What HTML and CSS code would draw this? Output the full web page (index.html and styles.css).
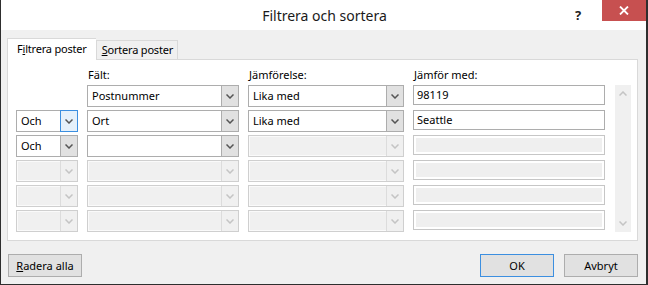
FILE: index.html
```html
<!DOCTYPE html>
<html lang="sv">
<head>
  <meta charset="UTF-8">
  <title>Filtrera och sortera</title>
  <link rel="stylesheet" href="styles.css">
</head>
<body>

  <div class="window">
    <!-- Title bar -->
    <div class="titlebar">
      <span class="title">Filtrera och sortera</span>
      <span class="help">?</span>
      <span class="close">
        <svg width="10" height="9" viewBox="0 0 10 9"><path d="M1 0.5 L9 8.5 M9 0.5 L1 8.5" stroke="#fff" stroke-width="1.8"/></svg>
      </span>
    </div>

    <div class="content">
      <!-- Tabs -->
      <div class="tabs">
        <div class="tab active">F<u>i</u>ltrera poster</div>
        <div class="tab"><u>S</u>ortera poster</div>
      </div>

      <div class="panel">
        <div class="grid">
          <div></div>
          <div class="label">Fält:</div>
          <div class="label">Jämförelse:</div>
          <div class="label">Jämför med:</div>

          <!-- row 1 -->
          <div></div>
          <div class="combo"><span class="val">Postnummer</span><span class="btn"><svg width="8" height="5" viewBox="0 0 8 5"><path d="M0.5 0.5 L4 4 L7.5 0.5" fill="none" stroke="#555" stroke-width="1.5"/></svg></span></div>
          <div class="combo"><span class="val">Lika med</span><span class="btn"><svg width="8" height="5" viewBox="0 0 8 5"><path d="M0.5 0.5 L4 4 L7.5 0.5" fill="none" stroke="#555" stroke-width="1.5"/></svg></span></div>
          <div class="field">98119</div>

          <!-- row 2 -->
          <div class="combo hover"><span class="val">Och</span><span class="btn"><svg width="8" height="5" viewBox="0 0 8 5"><path d="M0.5 0.5 L4 4 L7.5 0.5" fill="none" stroke="#555" stroke-width="1.5"/></svg></span></div>
          <div class="combo"><span class="val">Ort</span><span class="btn"><svg width="8" height="5" viewBox="0 0 8 5"><path d="M0.5 0.5 L4 4 L7.5 0.5" fill="none" stroke="#555" stroke-width="1.5"/></svg></span></div>
          <div class="combo"><span class="val">Lika med</span><span class="btn"><svg width="8" height="5" viewBox="0 0 8 5"><path d="M0.5 0.5 L4 4 L7.5 0.5" fill="none" stroke="#555" stroke-width="1.5"/></svg></span></div>
          <div class="field">Seattle</div>

          <!-- row 3 -->
          <div class="combo"><span class="val">Och</span><span class="btn"><svg width="8" height="5" viewBox="0 0 8 5"><path d="M0.5 0.5 L4 4 L7.5 0.5" fill="none" stroke="#555" stroke-width="1.5"/></svg></span></div>
          <div class="combo"><span class="val"></span><span class="btn"><svg width="8" height="5" viewBox="0 0 8 5"><path d="M0.5 0.5 L4 4 L7.5 0.5" fill="none" stroke="#555" stroke-width="1.5"/></svg></span></div>
          <div class="combo disabled"><span class="val"></span><span class="btn"><svg width="8" height="5" viewBox="0 0 8 5"><path d="M0.5 0.5 L4 4 L7.5 0.5" fill="none" stroke="#c4c4c4" stroke-width="1.5"/></svg></span></div>
          <div class="field disabled"></div>

          <!-- rows 4-6 -->
          <script>
            for (let i = 0; i < 3; i++) {
              let chev = '<span class="btn"><svg width="8" height="5" viewBox="0 0 8 5"><path d="M0.5 0.5 L4 4 L7.5 0.5" fill="none" stroke="#c4c4c4" stroke-width="1.5"/></svg></span>';
              document.write(`
                <div class="combo disabled"><span class="val"></span>${chev}</div>
                <div class="combo disabled"><span class="val"></span>${chev}</div>
                <div class="combo disabled"><span class="val"></span>${chev}</div>
                <div class="field disabled"></div>
              `);
            }
          </script>
        </div>

        <!-- Scrollbar -->
        <div class="scrollbar">
          <svg width="8" height="5" viewBox="0 0 8 5"><path d="M0.5 4.5 L4 1 L7.5 4.5" fill="none" stroke="#c4c4c4" stroke-width="1.5"/></svg>
          <svg width="8" height="5" viewBox="0 0 8 5"><path d="M0.5 0.5 L4 4 L7.5 0.5" fill="none" stroke="#c4c4c4" stroke-width="1.5"/></svg>
        </div>
      </div>

      <!-- Buttons -->
      <div class="buttons">
        <button class="button"><u>R</u>adera alla</button>
        <div class="spacer"></div>
        <button class="button default">OK</button>
        <button class="button">Avbryt</button>
      </div>
    </div>
  </div>

</body>
</html>
```

FILE: styles.css
```css
/* Global */
* {
  margin: 0;
  padding: 0;
  box-sizing: border-box;
}

body {
  font-family: 'Noto Sans', sans-serif;
  font-size: 11px;
  color: #000;
  background: #f0f0f0;
}

.window {
  width: 648px;
  height: 285px;
  background: #f0f0f0;
  border-left: 1px solid #2e2e2e;
  border-right: 2px solid #2e2e2e;
  border-bottom: 1px solid #2e2e2e;
  display: flex;
  flex-direction: column;
}

/* Title bar */
.titlebar {
  height: 30px;
  background: #fff;
  position: relative;
  display: flex;
  justify-content: center;
  align-items: center;
}

.title {
  font-size: 14px;
  color: #1a1a1a;
  margin-left: 2px;
}

.help {
  position: absolute;
  left: 574px;
  top: 6px;
  font-size: 13px;
  font-weight: bold;
  color: #222;
}

.close {
  position: absolute;
  right: 0;
  top: 0;
  width: 44px;
  height: 21px;
  background: #c75050;
  display: flex;
  justify-content: center;
  align-items: center;
}

/* Content */
.content {
  flex: 1;
  padding: 8px 8px 7px 6px;
  display: flex;
  flex-direction: column;
}

.tabs {
  display: flex;
  align-items: flex-end;
  height: 21px;
  position: relative;
  z-index: 1;
}

.tab {
  height: 19px;
  padding: 0 4px 0 5px;
  line-height: 17px;
  letter-spacing: -0.2px;
  border: 1px solid #d9d9d9;
  border-bottom: none;
  background: #f0f0f0;
}

.tab.active {
  height: 22px;
  margin-bottom: -1px;
  padding: 0 9px 0 9px;
  line-height: 20px;
  background: #fff;
  border-right: none;
}

.panel {
  display: flex;
  align-items: flex-start;
  background: #fff;
  border: 1px solid #d9d9d9;
  padding: 7px 6px 7px 8px;
  height: 182px;
}

/* Filter grid */
.grid {
  display: grid;
  grid-template-columns: 62px 152px 156px 192px;
  grid-template-rows: 15px repeat(6, 22px);
  column-gap: 9px;
  row-gap: 3px;
}

.label {
  line-height: 16px;
  padding-left: 1px;
}

.combo {
  display: flex;
  height: 22px;
  border: 1px solid #adadad;
  background: #fff;
}

.combo .val {
  flex: 1;
  padding-left: 4px;
  line-height: 19px;
}

.combo .btn {
  width: 17px;
  border-left: 1px solid #adadad;
  background: #e1e1e1;
  display: flex;
  justify-content: center;
  align-items: center;
}

.combo.hover .btn {
  margin: -1px -1px -1px 0;
  width: 18px;
  border: 1px solid #3c8fe0;
  background: #e5f1fb;
}

.combo.disabled {
  border-color: #cfcfcf;
  background: #f0f0f0;
  box-shadow: inset 0 0 0 1px #fafafa;
}

.combo.disabled .btn {
  border-left: 1px solid #dcdcdc;
  background: #f0f0f0;
}

.field {
  height: 20px;
  border: 1px solid #adadad;
  padding-left: 3px;
  line-height: 18px;
  background: #fff;
}

.field.disabled {
  border-color: #c6c6c6;
  background: #efefef;
  box-shadow: inset 0 0 0 2px #fff;
}

.scrollbar {
  width: 16px;
  height: 147px;
  margin: 18px 0 0 10px;
  background: #f0f0f0;
  display: flex;
  flex-direction: column;
  justify-content: space-between;
  align-items: center;
  padding: 6px 0 6px 0;
}

/* Buttons */
.buttons {
  margin-top: auto;
  display: flex;
  gap: 10px;
  padding-left: 1px;
}

.spacer {
  flex: 1;
}

.button {
  width: 74px;
  height: 23px;
  font-family: 'Noto Sans', sans-serif;
  font-size: 11px;
  color: #000;
  background: #e1e1e1;
  border: 1px solid #adadad;
}

.button.default {
  border-color: #3c8fe0;
}
```
